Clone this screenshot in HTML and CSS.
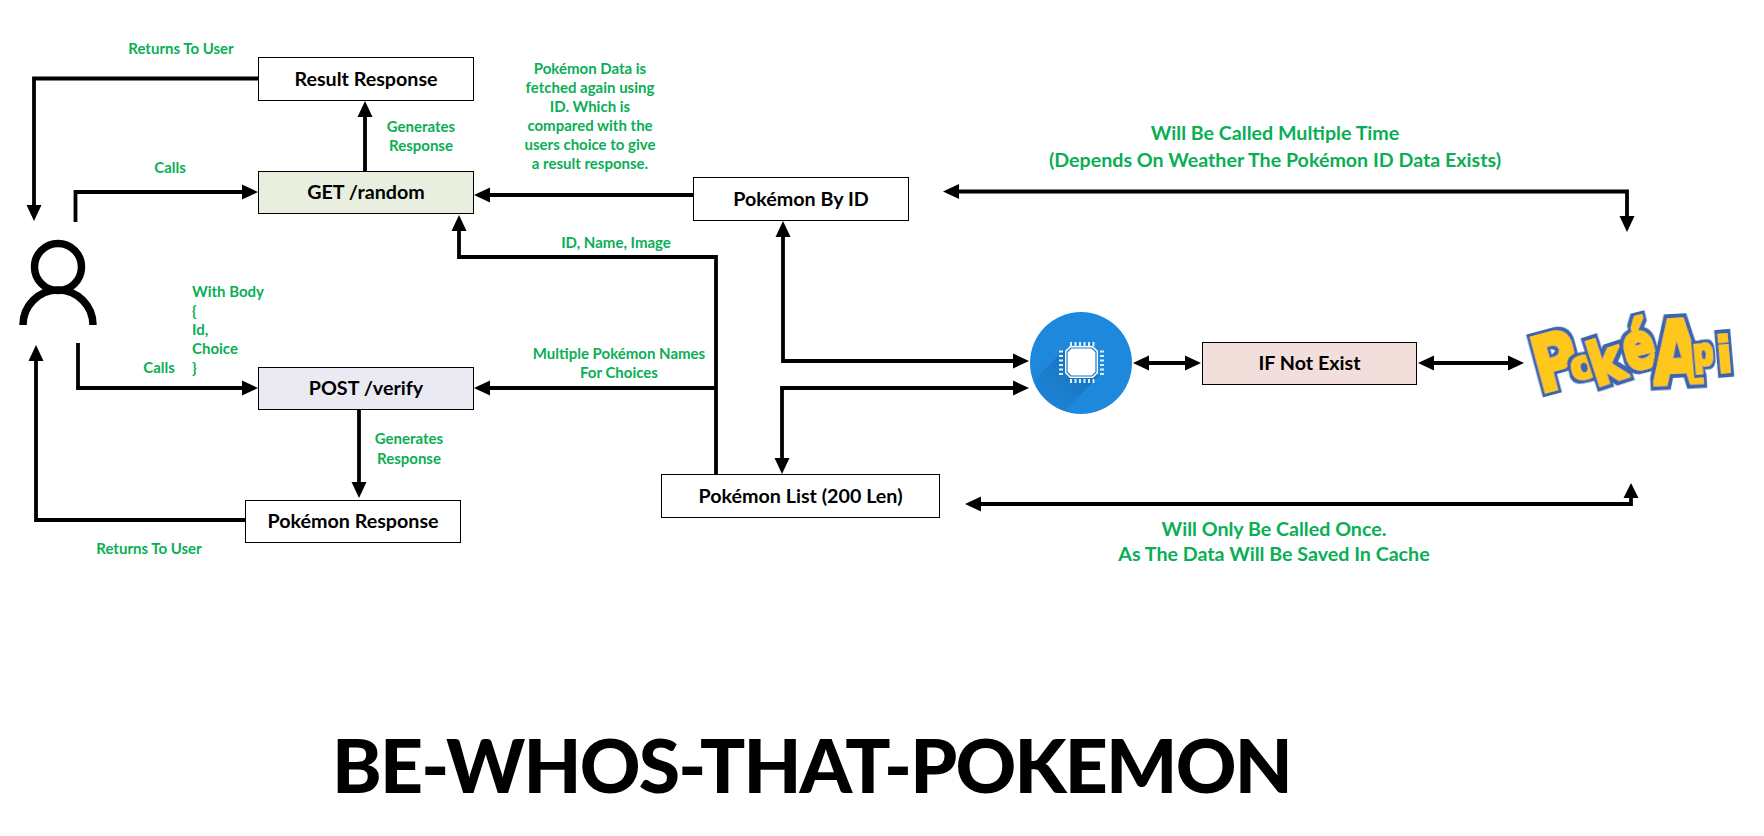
FILE: index.html
```html
<!DOCTYPE html>
<html lang="en">
<head>
<meta charset="utf-8">
<title>BE-WHOS-THAT-POKEMON</title>
<link rel="stylesheet" href="styles.css">
</head>
<body>
<main class="canvas">
  <svg class="wires" width="1764" height="836" viewBox="0 0 1764 836">
    <g class="wire">
      <path d="M258 78.5H34V206"/>
      <path d="M75.500 222V192H243"/>
      <path d="M365 171V116"/>
      <path d="M78 343V388H243"/>
      <path d="M245 520H36V360"/>
      <path d="M359 409V483"/>
      <path d="M693 195H489"/>
      <path d="M716 474V257H459V230"/>
      <path d="M716 388H489"/>
      <path d="M783 236V361H1014"/>
      <path d="M1014 388H782V459"/>
      <path d="M1148 363H1186"/>
      <path d="M1433 363H1509"/>
      <path d="M958 191.500H1627V218"/>
      <path d="M980 504H1631V496"/>
    </g>
    <g class="heads">
      <polygon points="34,221 26.500,205 41.500,205"/>
      <polygon points="258,192 242,184.500 242,199.500"/>
      <polygon points="365,101 357.500,117 372.500,117"/>
      <polygon points="258,388 242,380.500 242,395.500"/>
      <polygon points="36,345 28.500,361 43.500,361"/>
      <polygon points="359,498 351.500,482 366.500,482"/>
      <polygon points="474,195 490,187.500 490,202.500"/>
      <polygon points="459,215 451.500,231 466.500,231"/>
      <polygon points="474,388 490,380.500 490,395.500"/>
      <polygon points="783,221 775.500,237 790.500,237"/>
      <polygon points="1029,361 1013,353.500 1013,368.500"/>
      <polygon points="1029,388 1013,380.500 1013,395.500"/>
      <polygon points="782,474 774.500,458 789.500,458"/>
      <polygon points="1133,363 1149,355.500 1149,370.500"/>
      <polygon points="1201,363 1185,355.500 1185,370.500"/>
      <polygon points="1418,363 1434,355.500 1434,370.500"/>
      <polygon points="1524,363 1508,355.500 1508,370.500"/>
      <polygon points="943,191.500 959,184 959,199"/>
      <polygon points="1627,232 1619.500,216 1634.500,216"/>
      <polygon points="965,504 981,496.500 981,511.500"/>
      <polygon points="1631,483 1623.500,498 1638.500,498"/>
    </g>
    <g class="person">
      <circle cx="58" cy="267" r="23.500"/>
      <path d="M23 325A35 35 0 0 1 93 325"/>
    </g>
    <defs>
      <clipPath id="disc"><circle cx="1081" cy="363" r="51"/></clipPath>
      <linearGradient id="fall" x1="1" y1="0" x2="0" y2="1">
        <stop offset="0" stop-color="#135f9f" stop-opacity=".75"/>
        <stop offset="1" stop-color="#1e88dc" stop-opacity="0"/>
      </linearGradient>
      <filter id="logo-edge" x="-30%" y="-30%" width="160%" height="160%">
        <feMorphology in="SourceGraphic" operator="dilate" radius="1.300" result="fat"/>
        <feMorphology in="SourceAlpha" operator="dilate" radius="4.200" result="wide"/>
        <feFlood flood-color="#3b66ac"/>
        <feComposite in2="wide" operator="in" result="rim"/>
        <feMerge>
          <feMergeNode in="rim"/>
          <feMergeNode in="fat"/>
        </feMerge>
      </filter>
    </defs>
    <g class="chip">
      <circle class="chip-disc" cx="1081" cy="363" r="51"/>
      <polygon clip-path="url(#disc)" fill="url(#fall)" points="1063,351 1099,376 1040,435 1004,410"/>
      <g class="chip-pins">
        <path d="M1071 342v4M1075.500 342v4M1080 342v4M1084.500 342v4M1089 342v4M1093.500 342v4"/>
        <path d="M1071 379v4M1075.500 379v4M1080 379v4M1084.500 379v4M1089 379v4M1093.500 379v4"/>
        <path d="M1059 351.500h4M1059 356h4M1059 360.500h4M1059 365h4M1059 369.500h4M1059 374h4"/>
        <path d="M1100 351.500h4M1100 356h4M1100 360.500h4M1100 365h4M1100 369.500h4M1100 374h4"/>
      </g>
      <polygon class="chip-rim" points="1070,346 1093,346 1098,351 1098,373 1093,378 1070,378 1065,373 1065,351"/>
      <polygon class="chip-core" points="1071,348 1092,348 1096,352 1096,372 1092,376 1071,376 1067,372 1067,352"/>
    </g>
    <g class="logo">
      <text class="logo-p" filter="url(#logo-edge)" transform="translate(1540 393) rotate(-15) scale(1 1.2)">P</text>
      <text class="logo-o" filter="url(#logo-edge)" transform="translate(1573 381) rotate(-12)">o</text>
      <text class="logo-k" filter="url(#logo-edge)" transform="translate(1596 387) rotate(-18) scale(1 1.15)">k</text>
      <text class="logo-e" filter="url(#logo-edge)" transform="translate(1628 371) rotate(-14) scale(1 1.3)">é</text>
      <text class="logo-a" filter="url(#logo-edge)" transform="translate(1654 385) rotate(-3) scale(1 1.35)">A</text>
      <text class="logo-s" filter="url(#logo-edge)" transform="translate(1694 366) rotate(-5) scale(.75 1)">p</text>
      <text class="logo-i" filter="url(#logo-edge)" transform="translate(1718 373) rotate(-5) scale(1 1.1)">i</text>
    </g>
  </svg>

  <div class="box box-result">Result Response</div>
  <div class="box box-get">GET /random</div>
  <div class="box box-post">POST /verify</div>
  <div class="box box-pokemon">Pokémon Response</div>
  <div class="box box-byid">Pokémon By ID</div>
  <div class="box box-list">Pokémon List (200 Len)</div>
  <div class="box box-exist">IF Not Exist</div>

  <p class="note note-ret1">Returns To User</p>
  <p class="note note-calls1">Calls</p>
  <p class="note note-gen1">Generates<br>Response</p>
  <p class="note note-data">Pokémon Data is<br>fetched again using<br>ID. Which is<br>compared with the<br>users choice to give<br>a result response.</p>
  <p class="note note-idname">ID, Name, Image</p>
  <p class="note note-body">With Body<br>{<br>Id,<br>Choice<br>}</p>
  <p class="note note-calls2">Calls</p>
  <p class="note note-multi">Multiple Pokémon Names<br>For Choices</p>
  <p class="note note-gen2">Generates<br>Response</p>
  <p class="note note-ret2">Returns To User</p>
  <p class="call call-many">Will Be Called Multiple Time<br>(Depends On Weather The Pokémon ID Data Exists)</p>
  <p class="call call-once">Will Only Be Called Once.<br>As The Data Will Be Saved In Cache</p>

  <h1 class="title">BE-WHOS-THAT-POKEMON</h1>
</main>
</body>
</html>
```

FILE: styles.css
```css
* { box-sizing: border-box; }
html, body { margin: 0; background: #fff; }
body { overflow: hidden; }
.canvas {
  position: relative;
  width: 1764px;
  height: 836px;
  font-family: Lato, "Open Sans", sans-serif;
  font-weight: 700;
  background: #fff;
}
.wires { position: absolute; left: 0; top: 0; }
.wire path { fill: none; stroke: #000; stroke-width: 3.8; stroke-linejoin: miter; }
.heads polygon { fill: #000; }
.person circle, .person path { fill: none; stroke: #000; stroke-width: 7.5; }
.chip-disc { fill: #1e88dc; }
.chip-pins path { fill: none; stroke: #dff0fb; stroke-width: 2; }
.chip-rim { fill: #fff; }
.chip-core { fill: #fff; stroke: #1a78c4; stroke-width: 1.2; }

.logo text {
  font-family: "DejaVu Sans", sans-serif;
  font-weight: 700;
  fill: #ffc61a;
}
.logo-p { font-size: 62px; }
.logo-o { font-size: 40px; }
.logo-k { font-size: 52px; }
.logo-e { font-size: 48px; }
.logo-a { font-size: 64px; }
.logo-s { font-size: 38px; }
.logo-i { font-size: 46px; }

.box {
  position: absolute;
  display: flex;
  align-items: center;
  justify-content: center;
  padding-bottom: 2px;
  border: 1.5px solid #000;
  background: #fff;
  color: #000;
  font-size: 19.700px;
  white-space: nowrap;
}
.box-result { left: 258px; top: 57px; width: 216px; height: 44px; }
.box-get { left: 258px; top: 171px; width: 216px; height: 43px; background: #e9efdf; }
.box-post { left: 258px; top: 367px; width: 216px; height: 43px; background: #ebe9f1; }
.box-pokemon { left: 245px; top: 500px; width: 216px; height: 43px; }
.box-byid { left: 693px; top: 177px; width: 216px; height: 44px; }
.box-list { left: 661px; top: 474px; width: 279px; height: 44px; }
.box-exist { left: 1202px; top: 342px; width: 215px; height: 43px; background: #f2dedb; }

.note, .call {
  position: absolute;
  margin: 0;
  color: #0aae55;
  text-align: center;
  white-space: nowrap;
}
.note { font-size: 15px; line-height: 19px; transform: translateX(-50%); }
.call { font-size: 19.650px; line-height: 27px; transform: translateX(-50%); }
.note-ret1 { left: 181px; top: 39px; }
.note-calls1 { left: 170px; top: 158px; }
.note-gen1 { left: 421px; top: 117px; }
.note-data { left: 590px; top: 59px; }
.note-idname { left: 616px; top: 233px; }
.note-body { left: 192px; top: 282px; text-align: left; transform: none; }
.note-calls2 { left: 159px; top: 358px; }
.note-multi { left: 619px; top: 344px; }
.note-gen2 { left: 409px; top: 428px; line-height: 20px; }
.note-ret2 { left: 149px; top: 539px; }
.call-many { left: 1275px; top: 119px; }
.call-once { left: 1274px; top: 516px; line-height: 25px; }

.title {
  position: absolute;
  left: 332px;
  top: 719px;
  margin: 0;
  font-size: 75px;
  line-height: 90px;
  font-weight: 900;
  letter-spacing: -1.800px;
  color: #000;
  white-space: nowrap;
}
```
